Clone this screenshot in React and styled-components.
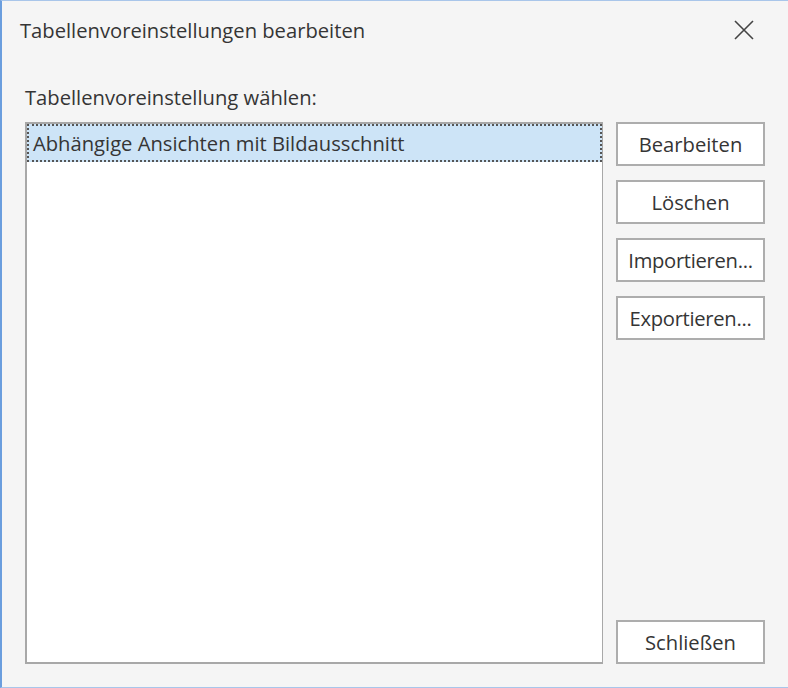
import React from "react";
import styled, { createGlobalStyle } from "styled-components";

const GlobalStyle = createGlobalStyle`
  html, body { margin: 0; padding: 0; background: #f5f5f5; }
  * { box-sizing: border-box; }
`;

const Window = styled.div`
  width: 788px;
  height: 688px;
  display: flex;
  flex-direction: column;
  background: #f5f5f5;
  border-left: 2px solid #6b9ede;
  border-top: 1px solid #a9c6ea;
  border-bottom: 1px solid #a9c6ea;
  font-family: "Open Sans", "Noto Sans", sans-serif;
  font-size: 20.2px;
  color: #353535;
`;

const TitleBar = styled.div`
  height: 59px;
  display: flex;
  align-items: center;
  justify-content: space-between;
  padding: 0 34px 2px 18px;
`;

const Title = styled.div``;

const CloseButton = styled.div`
  width: 20px;
  height: 20px;
  display: flex;
  align-items: center;
  justify-content: center;
`;

const Body = styled.div`
  flex: 1;
  display: flex;
  flex-direction: column;
  padding: 23px 23px 23px 23px;
`;

const Label = styled.div`
  height: 28px;
  line-height: 28px;
  margin-bottom: 11px;
`;

const Row = styled.div`
  flex: 1;
  display: flex;
  gap: 13px;
`;

const ListBox = styled.div`
  flex: 1;
  background: #fff;
  border: 2px solid #a8a8a8;
  border-right-width: 1px;
`;

const ListItem = styled.div`
  height: 38px;
  display: flex;
  align-items: center;
  padding-left: 4px;
  background: ${(p) => (p.selected ? "#cde4f7" : "transparent")};
  border: 2px dotted ${(p) => (p.selected ? "#555" : "transparent")};
`;

const ButtonColumn = styled.div`
  width: 149px;
  display: flex;
  flex-direction: column;
  gap: 14px;
`;

const Button = styled.div`
  height: 44px;
  background: #fff;
  border: 2px solid #adadad;
  display: flex;
  align-items: center;
  justify-content: center;
  white-space: nowrap;
  overflow: hidden;
  letter-spacing: ${(p) => (p.tight ? "-0.3px" : "0")};
  margin-top: ${(p) => (p.bottom ? "auto" : "0")};
`;

export default function App() {
  return (
    <>
      <GlobalStyle />
      <Window>
        <TitleBar>
          <Title>Tabellenvoreinstellungen bearbeiten</Title>
          <CloseButton>
            <svg width="20" height="20" viewBox="0 0 20 20">
              <path d="M1 1 L19 19 M19 1 L1 19" stroke="#444" strokeWidth="1.6" fill="none" />
            </svg>
          </CloseButton>
        </TitleBar>
        <Body>
          <Label>Tabellenvoreinstellung wählen:</Label>
          <Row>
            <ListBox>
              <ListItem selected>Abhängige Ansichten mit Bildausschnitt</ListItem>
            </ListBox>
            <ButtonColumn>
              <Button>Bearbeiten</Button>
              <Button>Löschen</Button>
              <Button tight>Importieren...</Button>
              <Button tight>Exportieren...</Button>
              <Button bottom>Schließen</Button>
            </ButtonColumn>
          </Row>
        </Body>
      </Window>
    </>
  );
}
